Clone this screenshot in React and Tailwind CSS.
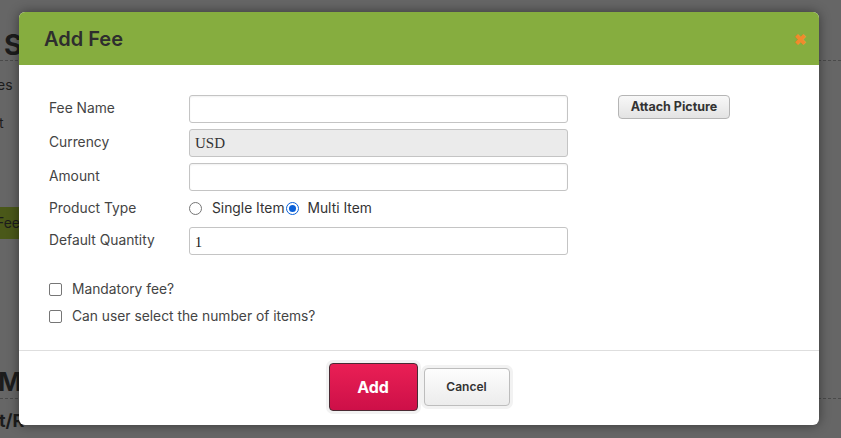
import React from "react";

function Label({ children }) {
  return <div className="w-[140px] shrink-0 text-[13.8px] text-[#444] leading-[20px] mt-[-2px]">{children}</div>;
}

export default function App() {
  return (
    <div className="relative w-[841px] h-[438px] overflow-hidden bg-[#666]" style={{ fontFamily: "Inter, 'Open Sans', sans-serif" }}>
      {/* background page (dimmed) */}
      <div className="flex flex-col text-[#1c1c1c]">
        <div className="pl-[4px] pt-[30px] text-[28px] font-bold leading-[30px]">S</div>
        <div className="border-t border-dashed border-[#4a4a4a] h-0 w-full" />
        <div className="mt-[14px] text-[14px] leading-[20px] ml-[-3px]">es</div>
        <div className="mt-[18px] text-[14px] leading-[20px] ml-[-1px]">t</div>
        <div className="mt-[74px] w-[40px] h-[32px] bg-[#4a5819] text-[14px] leading-[32px] ml-[-4px]">Fee</div>
        <div className="mt-[128px] text-[26px] font-bold leading-[30px] ml-[-2px]">M</div>
        <div className="border-t border-dashed border-[#4a4a4a] h-0 w-full mt-[1px]" />
        <div className="mt-[12px] text-[18px] font-bold leading-[20px] ml-[-1px]">t/R</div>
      </div>

      {/* modal */}
      <div className="absolute left-[19px] top-[12px] w-[800px] h-[413px] bg-white rounded-[6px] shadow-[0_0_12px_rgba(0,0,0,0.45)] flex flex-col overflow-hidden">
        <div className="h-[53px] shrink-0 bg-[#86ad3f] flex items-center justify-between pl-[25px] pr-[12px]">
          <span className="text-[20px] font-semibold text-[#2e2e2e]">Add Fee</span>
          <span className="text-[#f08a2c] text-[15px] font-black leading-none mt-[1px]">✖</span>
        </div>

        <div className="flex-1 flex flex-col pl-[30px] pt-[30px]">
          <div className="flex">
            <div className="flex flex-col gap-[6px]">
              <div className="flex items-center h-[28px]">
                <Label>Fee Name</Label>
                <div className="w-[379px] h-[28px] border border-[#c4c4c4] rounded-[3px] shadow-[inset_0_1px_2px_rgba(0,0,0,0.06)]" />
              </div>
              <div className="flex items-center h-[28px]">
                <Label>Currency</Label>
                <div className="w-[379px] h-[28px] border border-[#c4c4c4] rounded-[3px] bg-[#ebebeb] flex items-center pl-[5px] text-[15px] text-[#333]" style={{ fontFamily: "'Liberation Serif', serif" }}>USD</div>
              </div>
              <div className="flex items-center h-[28px]">
                <Label>Amount</Label>
                <div className="w-[379px] h-[28px] border border-[#c4c4c4] rounded-[3px] shadow-[inset_0_1px_2px_rgba(0,0,0,0.06)]" />
              </div>
              <div className="flex items-center h-[24px]">
                <Label>Product Type</Label>
                <div className="flex items-center text-[13.8px] text-[#333] mt-[-2px]">
                  <span className="w-[13px] h-[13px] rounded-full border border-[#767676] bg-white" />
                  <span className="ml-[10px]">Single Item</span>
                  <span className="ml-[1px] w-[13px] h-[13px] rounded-full border border-[#0a60d8] bg-white flex items-center justify-center">
                    <span className="w-[7px] h-[7px] rounded-full bg-[#0a60d8]" />
                  </span>
                  <span className="ml-[9px]">Multi Item</span>
                </div>
              </div>
              <div className="flex items-center h-[28px]">
                <Label>Default Quantity</Label>
                <div className="w-[379px] h-[28px] border border-[#c4c4c4] rounded-[3px] flex items-center pl-[5px] pt-[2px] text-[14px] text-[#111]" style={{ fontFamily: "'Liberation Serif', serif" }}>1</div>
              </div>
            </div>
            <div className="ml-[50px]">
              <div className="w-[112px] h-[24px] rounded-[4px] border border-[#b5b5b5] bg-gradient-to-b from-[#f8f8f8] to-[#e3e3e3] flex items-center justify-center text-[12.5px] font-bold text-[#333]">Attach Picture</div>
            </div>
          </div>

          <div className="mt-[27px] flex flex-col gap-[12px] text-[13.8px] text-[#444]">
            <label className="flex items-center h-[15px]">
              <span className="w-[13px] h-[13px] border border-[#767676] rounded-[2px] bg-white" />
              <span className="ml-[10px]">Mandatory fee?</span>
            </label>
            <label className="flex items-center h-[15px]">
              <span className="w-[13px] h-[13px] border border-[#767676] rounded-[2px] bg-white" />
              <span className="ml-[10px]">Can user select the number of items?</span>
            </label>
          </div>
        </div>

        <div className="h-[75px] shrink-0 border-t border-[#dedede] flex justify-center items-start pt-[9px]">
          <div className="flex items-center">
            <div className="p-[3px] rounded-[7px] bg-[#f2f2f2]">
              <div className="w-[89px] h-[48px] rounded-[4px] border border-[#4a2a33] bg-gradient-to-b from-[#ea1f55] to-[#cd0f48] flex items-center justify-center text-white text-[16px] font-bold">Add</div>
            </div>
            <div className="p-[3px] rounded-[7px] bg-[#f2f2f2]">
              <div className="w-[86px] h-[38px] rounded-[4px] border border-[#bdbdbd] bg-gradient-to-b from-[#fdfdfd] to-[#ececec] flex items-center justify-center text-[#333] text-[12px] font-semibold">Cancel</div>
            </div>
          </div>
        </div>
      </div>
    </div>
  );
}
